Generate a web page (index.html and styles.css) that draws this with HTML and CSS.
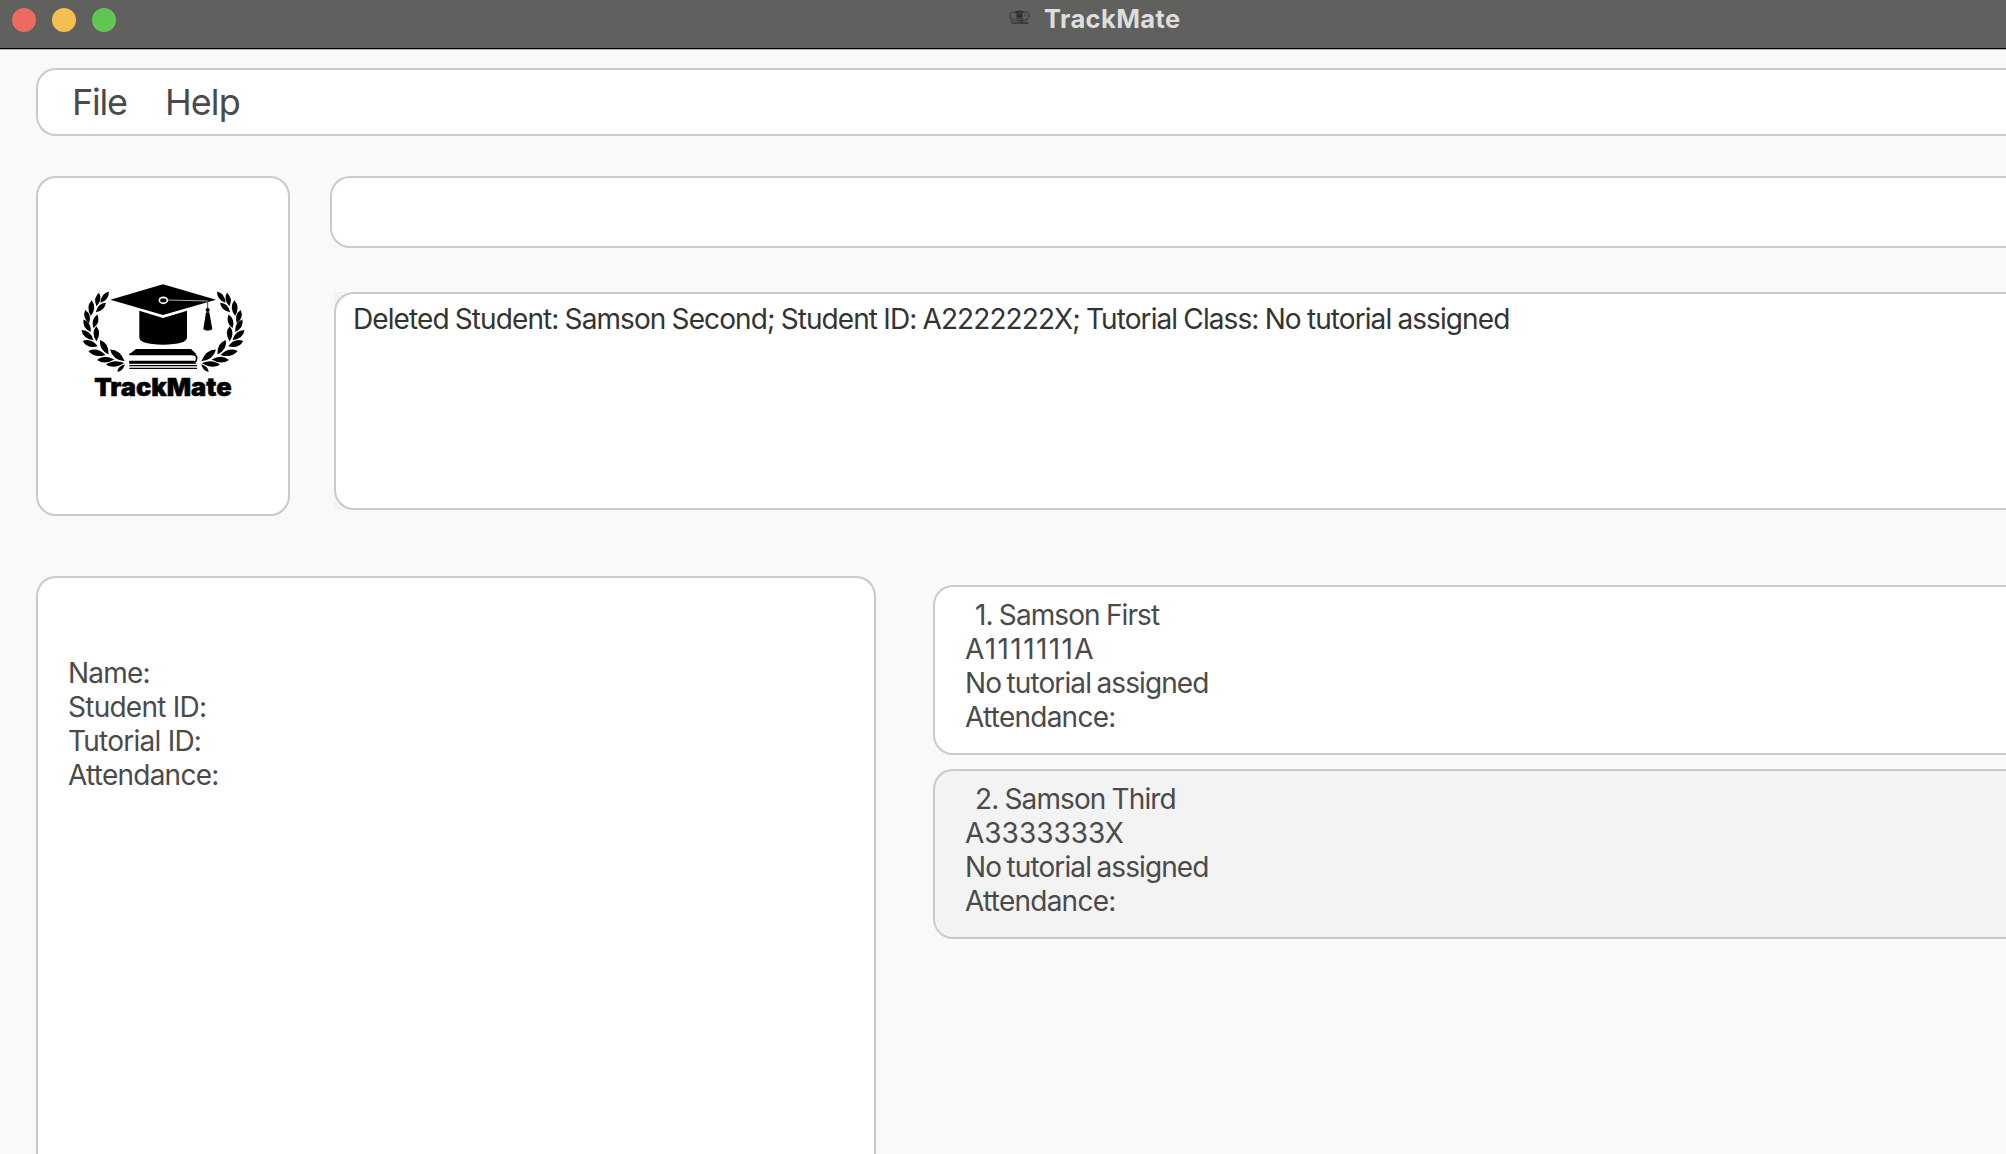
FILE: index.html
```
<!DOCTYPE html>
<html lang="en">
<head>
<meta charset="utf-8">
<title>TrackMate</title>
<link rel="stylesheet" href="styles.css">
</head>
<body>
<svg class="defs" aria-hidden="true">
  <defs>
    <path id="leaf" d="M-1 0Q20 -18 47 0Q20 18 -1 0Z"/>
    <g id="branch" transform="translate(24 45)">
      <use href="#leaf" transform="translate(92 20) rotate(126) scale(.88)"/>
      <use href="#leaf" transform="translate(63 24) rotate(101) scale(.86)"/>
      <use href="#leaf" transform="translate(83 54) rotate(137) scale(.86)"/>
      <use href="#leaf" transform="translate(41 47) rotate(93) scale(.98)"/>
      <use href="#leaf" transform="translate(58 89) rotate(106) scale(.9)"/>
      <use href="#leaf" transform="translate(22 76) rotate(74) scale(.88)"/>
      <use href="#leaf" transform="translate(17 104) rotate(60) scale(.9)"/>
      <use href="#leaf" transform="translate(11 136) rotate(40) scale(.98)"/>
      <use href="#leaf" transform="translate(55 125) rotate(90) scale(.95)"/>
      <use href="#leaf" transform="translate(15 168) rotate(20)"/>
      <use href="#leaf" transform="translate(67 166) rotate(60) scale(1.05)"/>
      <use href="#leaf" transform="translate(32 198) rotate(13) scale(1.1 1)"/>
      <use href="#leaf" transform="translate(97 194) rotate(39) scale(1.18 1.05)"/>
      <use href="#leaf" transform="translate(58 225) rotate(-2) scale(1.08 .95)"/>
      <use href="#leaf" transform="translate(85 239) rotate(-5) scale(1.15 .9)"/>
      <use href="#leaf" transform="translate(118 260) rotate(-45) scale(.68 .6)"/>
    </g>
    <symbol id="logo" viewBox="0 0 570 420">
      <use href="#branch"/>
      <use href="#branch" transform="translate(558 0) scale(-1 1)"/>
      <path d="M121 89L279 43L438 89L279 135Z"/>
      <path d="M208 122L279 144L351 122V202Q351 224 279 224Q208 224 208 202Z"/>
      <path d="M293 90L413 93V116" fill="none" stroke="#ccc" stroke-width="2.5"/>
      <path d="M413 93V118" fill="none" stroke="#000" stroke-width="2"/>
      <ellipse cx="280" cy="91" rx="12" ry="9" fill="#000" stroke="#fff" stroke-width="5"/>
      <circle cx="413" cy="120" r="6"/>
      <path d="M408 127H418L427 178Q413 186 400 178Z"/>
      <path d="M198 237H363L380 253H178Z"/>
      <path d="M178 253H365Q380 253 380 264Q380 277 370 277H178" fill="none" stroke="#000" stroke-width="5"/>
      <path d="M178 272H372L380 281H178ZM178 285H381V289H178ZM178 293H381V297H178Z"/>
      <text x="73" y="377" textLength="412" lengthAdjust="spacingAndGlyphs" class="logo-word">TrackMate</text>
    </symbol>
  </defs>
</svg>
<header class="titlebar">
  <div class="lights"><span class="light red"></span><span class="light amber"></span><span class="light green"></span></div>
  <div class="title"><svg class="title-icon" viewBox="32 40 494 345"><use href="#logo" width="570" height="420"/></svg><span>TrackMate</span></div>
</header>
<main class="window">
  <nav class="panel menu"><span class="file">File</span><span class="help">Help</span></nav>
  <section class="top">
    <div class="panel logo-card"><svg class="logo"><use href="#logo"/></svg></div>
    <div class="io">
      <div class="panel command"></div>
      <div class="result-wrap"><div class="panel result">Deleted Student: Samson Second; Student ID: A2222222X; Tutorial Class: No tutorial assigned</div></div>
    </div>
  </section>
  <section class="content">
    <div class="panel details">
      <div class="name">Name:</div>
      <div class="label">Student ID:</div>
      <div class="label">Tutorial ID:</div>
      <div class="label">Attendance:</div>
    </div>
    <div class="list">
      <article class="panel card">
        <div class="student">1. Samson First</div>
        <div class="ones">A1111111A</div>
        <div class="tutorial">No tutorial assigned</div>
        <div class="label">Attendance:</div>
      </article>
      <article class="panel card alt">
        <div class="student">2. Samson Third</div>
        <div>A3333333X</div>
        <div class="tutorial">No tutorial assigned</div>
        <div class="label">Attendance:</div>
      </article>
    </div>
  </section>
</main>
</body>
</html>
```
FILE: styles.css
```
* { box-sizing: border-box; }
body {
  margin: 0;
  height: 1154px;
  overflow: hidden;
  display: flex;
  flex-direction: column;
  background: #f9f9f9;
  color: #4a4a4a;
  font: 28px/34px Inter, "Liberation Sans", sans-serif;
  white-space: nowrap;
}
.defs { position: absolute; width: 0; height: 0; }

.titlebar {
  flex: none;
  height: 50px;
  display: flex;
  background: #60605e;
  border-bottom: 1px solid #b4b4b4;
  box-shadow: inset 0 -1px #000;
}
.lights { display: flex; gap: 16px; padding: 8px 0 0 12px; width: 1009px; }
.light { width: 24px; height: 24px; border-radius: 50%; }
.red { background: #ed6a5e; }
.amber { background: #f5bf4f; }
.green { background: #61c554; }
.title {
  display: flex;
  align-items: flex-start;
  gap: 14px;
  padding-top: 2px;
  font-size: 25.5px;
  font-weight: 700;
  letter-spacing: 0.4px;
  color: #dededd;
}
.title-icon { width: 21px; height: 15px; margin-top: 8px; opacity: 0.5; }

.window {
  flex: 1;
  min-height: 0;
  display: flex;
  flex-direction: column;
  padding: 18px 0 0 36px;
}
.panel { background: #fff; border: 2px solid #cacaca; border-radius: 20px; }
.menu, .command, .result, .card {
  border-right: 0;
  border-top-right-radius: 0;
  border-bottom-right-radius: 0;
}
.menu {
  flex: none;
  height: 68px;
  display: flex;
  gap: 38px;
  padding: 10px 34px;
  font-size: 36px;
  line-height: 44px;
}
.file { letter-spacing: -1.2px; }
.help { letter-spacing: -0.9px; }

.top { flex: none; display: flex; gap: 40px; margin-top: 40px; height: 340px; }
.logo-card { width: 254px; display: flex; padding: 92px 0 0 32px; }
.logo { width: 190px; height: 140px; }
.logo-word { font: 900 73px Inter, sans-serif; stroke: #000; stroke-width: 1.5px; }
.io { flex: 1; display: flex; flex-direction: column; gap: 44px; }
.command { height: 72px; }
.result-wrap { margin-left: 4px; background: #f3f3f3; }
.result { height: 218px; padding: 8px 17px; color: #333; letter-spacing: -0.91px; word-spacing: -0.8px; }

.content { flex: 1; min-height: 0; display: flex; gap: 57px; margin-top: 60px; }
.details {
  width: 840px;
  padding: 78px 30px 0;
  border-bottom: 0;
  border-bottom-left-radius: 0;
  border-bottom-right-radius: 0;
}
.name { letter-spacing: -0.8px; }
.label { letter-spacing: -0.75px; }
.list { flex: 1; display: flex; flex-direction: column; gap: 14px; padding-top: 9px; }
.card { height: 170px; padding: 11px 30px; }
.alt { background: #f3f3f3; }
.student { margin-left: 10px; letter-spacing: -0.9px; word-spacing: -0.8px; }
.ones { letter-spacing: 1.4px; }
.tutorial { letter-spacing: -0.9px; word-spacing: -1.5px; }
```
